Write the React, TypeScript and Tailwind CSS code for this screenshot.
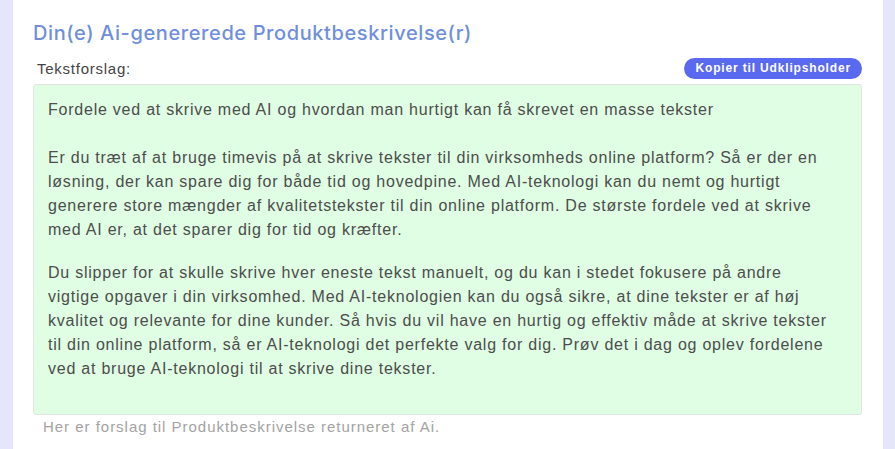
import React from "react";

const para1 = "Fordele ved at skrive med AI og hvordan man hurtigt kan få skrevet en masse tekster";
const para2 = [
  "Er du træt af at bruge timevis på at skrive tekster til din virksomheds online platform? Så er der en",
  "løsning, der kan spare dig for både tid og hovedpine. Med AI-teknologi kan du nemt og hurtigt",
  "generere store mængder af kvalitetstekster til din online platform. De største fordele ved at skrive",
  "med AI er, at det sparer dig for tid og kræfter.",
];
const para3 = [
  "Du slipper for at skulle skrive hver eneste tekst manuelt, og du kan i stedet fokusere på andre",
  "vigtige opgaver i din virksomhed. Med AI-teknologien kan du også sikre, at dine tekster er af høj",
  "kvalitet og relevante for dine kunder. Så hvis du vil have en hurtig og effektiv måde at skrive tekster",
  "til din online platform, så er AI-teknologi det perfekte valg for dig. Prøv det i dag og oplev fordelene",
  "ved at bruge AI-teknologi til at skrive dine tekster.",
];

export default function App() {
  return (
    <div
      className="flex h-[449px] w-[895px] overflow-hidden bg-[#e6e6fa]"
      style={{ fontFamily: '"Liberation Sans", Arial, sans-serif' }}
    >
      <div className="ml-[13px] flex w-[870px] flex-col bg-white px-[20px] pt-[21px]">
        <h1
          className="text-[20px] font-medium leading-[24px] tracking-[0.03em] text-[#6f8fdc]"
          style={{ fontFamily: 'Inter, "Liberation Sans", sans-serif' }}
        >
          Din(e) Ai-genererede Produktbeskrivelse(r)
        </h1>
        <div className="mt-[13px] flex items-end justify-between">
          <span className="mb-[1px] pl-[4px] text-[15px] leading-[18px] tracking-[0.05em] text-[#444]">
            Tekstforslag:
          </span>
          <button className="mr-[1px] h-[21px] rounded-full bg-[#5a6af0] px-[11px] text-[12px] font-semibold leading-[21px] tracking-[0.07em] text-white">
            Kopier til Udklipsholder
          </button>
        </div>
        <div className="mt-[5px] h-[331px] w-[829px] rounded-[3px] border border-[#e2e4e2] bg-[#dffee3] px-[14px] pt-[13px] text-[16px] leading-[24px] tracking-[0.048em] text-[#4d4d4d]">
          <div className="whitespace-nowrap">{para1}</div>
          <div className="h-[24px]" />
          {para2.map((l) => (
            <div key={l} className="whitespace-nowrap">{l}</div>
          ))}
          <div className="h-[19px]" />
          {para3.map((l) => (
            <div key={l} className="whitespace-nowrap">{l}</div>
          ))}
        </div>
        <div className="mt-[3px] pl-[10px] text-[15px] leading-[18px] tracking-[0.065em] text-[#a3a3a3]">
          Her er forslag til Produktbeskrivelse returneret af Ai.
        </div>
      </div>
    </div>
  );
}
